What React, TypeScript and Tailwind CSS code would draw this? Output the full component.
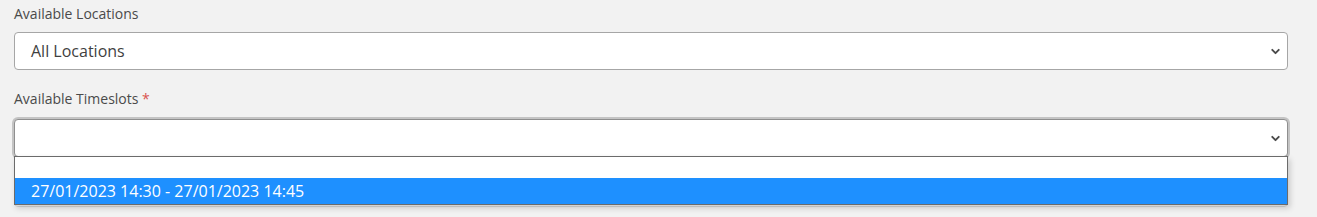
import { ChevronDown } from "lucide-react";

const font = { fontFamily: '"Open Sans", "Noto Sans", sans-serif' };

function SelectBox({ value, focused }: { value?: string; focused?: boolean }) {
  return (
    <div
      className={`flex h-[38px] items-center justify-between rounded-[4px] border bg-white pl-[16px] pr-[5px] ${
        focused
          ? "border-[#8f8f8f] shadow-[0_0_0_2px_#c4c4c4]"
          : "border-[#a6a6a6]"
      }`}
    >
      <span className="text-[16px] text-[#3f3f3f]">{value}</span>
      <ChevronDown size={13} strokeWidth={3.5} className="text-[#4a4a4a]" />
    </div>
  );
}

export default function App() {
  return (
    <div style={font} className="h-[217px] overflow-hidden bg-[#f2f2f2] pl-[14px] pr-[29px] pt-[4px]">
      <label className="block text-[14px] leading-[20px] text-[#4a4a4a]">Available Locations</label>
      <div className="mt-[8px]">
        <SelectBox value="All Locations" />
      </div>

      <label className="mt-[19px] block text-[14px] leading-[20px] text-[#4a4a4a]">
        Available Timeslots <span className="text-[#d9534f]">*</span>
      </label>
      <div className="relative mt-[10px]">
        <SelectBox focused />
        <div className="absolute left-0 right-0 top-[37px] z-10 border border-[#6b6b6b] bg-white shadow-[2px_3px_6px_rgba(0,0,0,0.18)]">
          <div className="h-[21px]" />
          <div className="flex h-[26px] items-center bg-[#1e90ff] pl-[16px] text-[16px] text-white">
            27/01/2023 14:30 - 27/01/2023 14:45
          </div>
        </div>
        <div className="mt-[10px] h-[40px] rounded-[4px] border border-[#d6d6d6] bg-[#f7f7f7]" />
      </div>
    </div>
  );
}
